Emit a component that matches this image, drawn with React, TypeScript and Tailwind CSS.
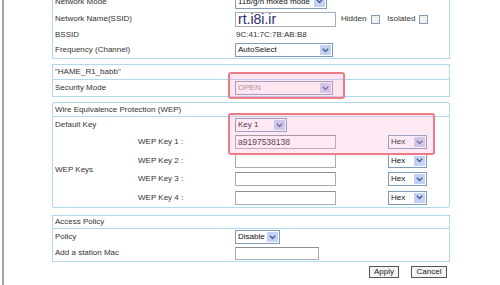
import React from 'react';

const Chevron = () => (
  <svg width="7" height="5" viewBox="0 0 7 5">
    <path d="M0.8 0.8 L3.5 3.6 L6.2 0.8" fill="none" stroke="#4a5f8c" strokeWidth="1.4" />
  </svg>
);

const Select: React.FC<{ w: string; text: string; muted?: boolean; h?: string }> = ({ w, text, muted, h = 'h-[14px]' }) => (
  <div className={`${w} ${h} flex items-stretch border border-[#7f9db9] bg-white`}>
    <div className={`flex-1 flex items-center pl-[2px] text-[8px] leading-none overflow-hidden whitespace-nowrap ${muted ? 'text-[#8a8a8a]' : 'text-[#111]'}`}>
      {text}
    </div>
    <div className="w-[11px] m-[1px] flex items-center justify-center bg-[#c3d1f6]">
      <Chevron />
    </div>
  </div>
);

const Input: React.FC<{ w: string; value?: string; h?: string }> = ({ w, value, h = 'h-[14px]' }) => (
  <div className={`${w} ${h} flex items-center border border-[#a7adb5] border-t-[#8c9096] bg-white pl-[2px] text-[8.5px] leading-none text-[#222]`}>
    {value}
  </div>
);

const Checkbox = () => <div className="w-[9px] h-[9px] border border-[#7f9db9] bg-[#eef0f2]" />;

const Row: React.FC<{ label: string; h: string; children?: React.ReactNode }> = ({ label, h, children }) => (
  <div className={`flex items-center ${h}`}>
    <div className="w-[182px] pl-[2px]">{label}</div>
    {children}
  </div>
);

const Header: React.FC<{ h: string; children: React.ReactNode }> = ({ h, children }) => (
  <div className={`${h} flex items-center pl-[2px] border-b border-[#b0d9ec]`}>{children}</div>
);

export default function App() {
  const keys = [
    { label: 'WEP Key 1 :', value: 'a9197538138', h: 'h-[18px]' },
    { label: 'WEP Key 2 :', value: '', h: 'h-[19px]' },
    { label: 'WEP Key 3 :', value: '', h: 'h-[18px]' },
    { label: 'WEP Key 4 :', value: '', h: 'h-[19px]' },
  ];

  return (
    <div className="relative w-[500px] h-[285px] overflow-hidden bg-white flex font-['Liberation_Sans',Arial,sans-serif] text-[8px] text-[#333]">
      <div className="w-[2px] ml-[2px] bg-[#a3a3a3]" />

      <div className="ml-[48px] w-[398px] flex flex-col">
        {/* Wireless basics */}
        <div className="-mt-[8px] border border-[#b0d9ec]">
          <Row label="Network Mode" h="h-[17px]">
            <Select w="w-[92px]" text="11b/g/n mixed mode" />
          </Row>
          <Row label="Network Name(SSID)" h="h-[18px]">
            <div className="w-[101px] h-[15px] flex items-center border border-[#a7adb5] bg-white pl-[2px] text-[14px] leading-none text-[#2c2a70]">
              rt.i8i.ir
            </div>
            <span className="ml-[5px]">Hidden</span>
            <div className="ml-[5px]"><Checkbox /></div>
            <span className="ml-[7px]">Isolated</span>
            <div className="ml-[4px]"><Checkbox /></div>
          </Row>
          <Row label="BSSID" h="h-[14px]">
            <span className="pl-[1px]">9C:41:7C:7B:AB:B8</span>
          </Row>
          <Row label="Frequency (Channel)" h="h-[16px]">
            <Select w="w-[98px]" text="AutoSelect" />
          </Row>
        </div>

        {/* SSID security */}
        <div className="mt-[5px] border border-[#b0d9ec]">
          <Header h="h-[15px]">"HAME_R1_babb"</Header>
          <Row label="Security Mode" h="h-[16px]">
            <Select w="w-[98px]" text="OPEN" muted />
          </Row>
        </div>

        {/* WEP */}
        <div className="mt-[5px] border border-[#b0d9ec] rounded-[2px]">
          <Header h="h-[14px]">Wire Equivalence Protection (WEP)</Header>
          <Row label="Default Key" h="h-[16px]">
            <Select w="w-[52px]" text="Key 1" />
          </Row>
          <div className="flex">
            <div className="w-[85px] pl-[2px] flex items-center">WEP Keys</div>
            <div className="flex flex-col">
              {keys.map((k) => (
                <div key={k.label} className={`flex items-center ${k.h}`}>
                  <div className="w-[97px]">{k.label}</div>
                  <Input w="w-[101px]" value={k.value} />
                  <div className="ml-[52px]">
                    <Select w="w-[39px]" text="Hex" />
                  </div>
                </div>
              ))}
            </div>
          </div>
        </div>

        {/* Access policy */}
        <div className="mt-[7px] border border-[#b0d9ec]">
          <Header h="h-[13px]">Access Policy</Header>
          <Row label="Policy" h="h-[16px]">
            <Select w="w-[45px]" text="Disable" />
          </Row>
          <Row label="Add a station Mac" h="h-[16px]">
            <Input w="w-[84px]" h="h-[13px]" />
          </Row>
        </div>

        <div className="mt-[4px] flex justify-end gap-[12px] pr-[3px]">
          <button className="w-[30px] h-[12px] border border-[#555] bg-[#f3f3f3] text-[8px] leading-none text-[#222]">Apply</button>
          <button className="w-[36px] h-[12px] border border-[#555] bg-[#f3f3f3] text-[8px] leading-none text-[#222]">Cancel</button>
        </div>
      </div>

      {/* annotation highlights */}
      <div className="absolute left-[228px] top-[72px] w-[117px] h-[27px] border-2 border-[#ee7b86] rounded-[3px] bg-[#f7a9cf]/30" />
      <div className="absolute left-[228px] top-[113px] w-[207px] h-[42px] border-2 border-[#ee7b86] rounded-[3px] bg-[#f7a9cf]/25" />
    </div>
  );
}
